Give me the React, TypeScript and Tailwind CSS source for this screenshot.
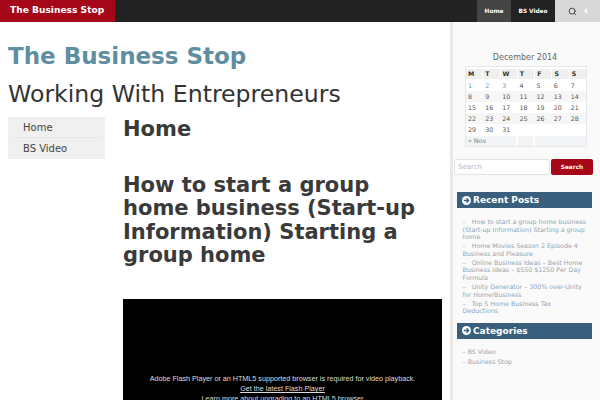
import { Search } from "lucide-react";

const days = [
    ["1", "2", "3", "4", "5", "6", "7"],
    ["8", "9", "10", "11", "12", "13", "14"],
    ["15", "16", "17", "18", "19", "20", "21"],
    ["22", "23", "24", "25", "26", "27", "28"],
    ["29", "30", "31", "", "", "", ""],
];

const posts = [
    "How to start a group home business (Start-up Information) Starting a group home",
    "Home Movies Season 2 Episode 4 Business and Pleasure",
    "Online Business Ideas – Best Home Business Ideas – $550 $1250 Per Day Formula",
    "Unity Generator – 300% over-Unity for Home/Business",
    "Top 5 Home Business Tax Deductions",
];

function WidgetTitle({ title }: { title: string }) {
    return (
        <div className="flex h-[16px] items-center gap-[2px] bg-[#3a5f7d] pl-[5px] text-[9px] leading-[16px] font-bold text-white">
            <svg width="9" height="9" viewBox="0 0 10 10" className="shrink-0">
                <circle cx="5" cy="5" r="5" fill="#fff" />
                <path d="M2 5h5M5 2.6 7.4 5 5 7.4" stroke="#3a5f7d" strokeWidth="1.5" fill="none" />
            </svg>
            <span>{title}</span>
        </div>
    );
}

function Calendar() {
    return (
        <div className="ml-[11px] w-[122px] border border-[#e4e8ec] bg-white text-[6.3px] leading-[11px] text-[#555]">
            <div className="grid h-[13px] grid-cols-7 items-end gap-x-px pb-px">
                {["M", "T", "W", "T", "F", "S", "S"].map((d, i) => (
                    <div key={i} className="h-[10px] bg-[#efefef] pl-[2px] leading-[10px] font-bold text-[#333]">
                        {d}
                    </div>
                ))}
            </div>
            {days.map((row, r) => (
                <div key={r} className={r % 2 === 1 ? "grid grid-cols-7 bg-[#f6f6f6]" : "grid grid-cols-7 bg-white"}>
                    {row.map((d, i) => (
                        <div key={i} className={r === 0 && i < 3 ? "h-[11px] pl-[2px] text-[#6f93a6]" : "h-[11px] pl-[2px]"}>
                            {d}
                        </div>
                    ))}
                </div>
            ))}
            <div className="flex h-[11px] gap-[2px] pt-px">
                <div className="w-[50px] bg-[#f2f4f5] pl-[2px] leading-[10px] text-[#5d8799]">« Nov</div>
                <div className="w-[15px] bg-[#f2f4f5]" />
                <div className="flex-1 bg-[#f2f4f5]" />
            </div>
        </div>
    );
}

export default function App() {
    return (
        <div className="flex h-[400px] w-[600px] flex-col overflow-hidden bg-white font-['DejaVu_Sans',sans-serif]">
            <header className="flex h-[22px] shrink-0 items-stretch bg-[#222] text-[5.8px] font-bold text-white">
                <div className="flex w-[115px] items-center bg-[#a50618] pl-[10px] text-[9.1px]">The Business Stop</div>
                <div className="flex-1" />
                <div className="flex w-[34px] items-center justify-center bg-[#444]">Home</div>
                <div className="flex w-[44px] items-center justify-center">BS Video</div>
                <div className="flex w-[45px] items-center gap-[7px] bg-[#d8d8d8] pl-[13px] text-white">
                    <Search size={9} strokeWidth={2.5} className="text-[#444]" />
                    <span className="h-0 w-0 border-y-[3px] border-r-[3px] border-y-transparent border-r-white" />
                </div>
            </header>

            <div className="flex min-h-0 flex-1">
                <main className="w-[450px] shrink-0 pt-[19px] pl-[8px]">
                    <h1 className="text-[23px] leading-[30px] font-bold text-[#5f8ea1]">The Business Stop</h1>
                    <p className="mt-[8px] text-[23.6px] leading-[30px] text-[#333]">Working With Entrepreneurs</p>
                    <div className="mt-[8px] flex gap-[18px]">
                        <nav className="h-[42px] w-[97px] shrink-0 bg-[#f0f0f0] px-[5px] text-[10px] text-[#444]">
                            <div className="h-[21px] border-b border-[#e6e6e6] pl-[10px] leading-[21px]">Home</div>
                            <div className="h-[21px] pl-[10px] leading-[21px]">BS Video</div>
                        </nav>
                        <article className="w-[319px] shrink-0">
                            <h2 className="text-[21px] leading-[25px] font-bold text-[#3a3a3a]">Home</h2>
                            <h2 className="mt-[32px] pr-[20px] text-[21px] leading-[23.3px] font-bold text-[#3a3a3a]">
                                How to start a group home business (Start-up Information) Starting a group home
                            </h2>
                            <div className="mt-[32px] flex h-[140px] flex-col items-center bg-black pt-[75px] font-['Liberation_Sans',sans-serif] text-[7.2px] leading-[10px] text-[#ddd]">
                                <p className="whitespace-nowrap">Adobe Flash Player or an HTML5 supported browser is required for video playback.</p>
                                <p className="underline">Get the latest Flash Player</p>
                                <p className="underline">Learn more about upgrading to an HTML5 browser</p>
                            </div>
                        </article>
                    </div>
                </main>

                <aside className="flex-1 border-l-[3px] border-[#e8e8e8] bg-[#fafafa] pl-px">
                    <h3 className="mt-[29.5px] pr-[4px] text-center text-[8px] leading-[11px] font-normal text-[#666]">
                        December 2014
                    </h3>
                    <div className="mt-[3px]">
                        <Calendar />
                    </div>
                    <div className="mt-[12px] flex h-[16px]">
                        <div className="w-[96px] rounded-[2px] border border-[#e2e2e2] bg-white pl-[3px] text-[7px] leading-[14px] text-[#bbb]">
                            Search
                        </div>
                        <div className="ml-px w-[42px] rounded-[2px] bg-[#a50618] text-center text-[5.8px] leading-[16px] font-bold text-white">
                            Search
                        </div>
                    </div>

                    <div className="mt-[17.5px] ml-[3px] w-[135px]">
                        <WidgetTitle title="Recent Posts" />
                        <ul className="mt-[10px] pr-[5.5px] pl-[5.5px] text-[6.3px] leading-[7.5px] text-[#92a5b1]">
                            {posts.map((p) => (
                                <li key={p} className="mb-[1.7px]">
                                    –&nbsp;&nbsp;&nbsp;{p}
                                </li>
                            ))}
                        </ul>
                        <div className="mt-[8px]">
                            <WidgetTitle title="Categories" />
                        </div>
                        <ul className="mt-[8.7px] pl-[5.5px] text-[6.3px] leading-[10px] text-[#92a5b1]">
                            <li>– BS Video</li>
                            <li>– Business Stop</li>
                        </ul>
                    </div>
                </aside>
            </div>
        </div>
    );
}
